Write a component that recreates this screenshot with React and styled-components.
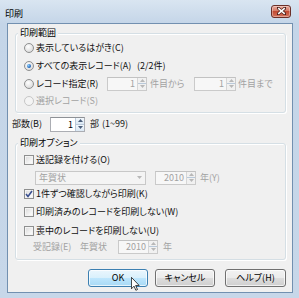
import React from 'react'
import styled, { createGlobalStyle } from 'styled-components'

const GlobalStyle = createGlobalStyle`
  html, body {
    margin: 0;
    padding: 0;
    background: #c8d8ea;
  }
  body {
    font-family: "Noto Sans CJK JP", "Noto Sans", sans-serif;
    font-size: 9px;
    color: #000;
  }
  * {
    box-sizing: border-box;
  }
`

const Window = styled.div`
  position: relative;
  width: 299px;
  height: 298px;
  overflow: hidden;
  display: flex;
  flex-direction: column;
  background: linear-gradient(#d9e5f1, #c4d5e8 24px, #c7d7e9);
  font-feature-settings: 'palt';
  line-height: 12px;
`

const TitleBar = styled.div`
  height: 23px;
  flex: none;
  display: flex;
  align-items: center;
  justify-content: space-between;
  padding: 0 8px 0 5px;
`

const Title = styled.span`
  font-size: 9px;
  margin-top: 5px;
`

const CloseBtn = styled.div`
  width: 20px;
  height: 13px;
  margin-top: -1px;
  border: 1px solid #6b2f28;
  border-radius: 3px;
  display: flex;
  align-items: center;
  justify-content: center;
  background: linear-gradient(#e9a99b, #d57b68 45%, #c24a33 50%, #d4735c);
  box-shadow: inset 0 0 0 1px rgba(255, 255, 255, 0.35);
`

const Client = styled.div`
  flex: 1;
  margin: 0 6px 5px 7px;
  border: 1px solid #7290b0;
  background: #f0f0f0;
  display: flex;
  flex-direction: column;
  padding: 0 6px 0 7px;
`

const Group = styled.div`
  position: relative;
  margin-top: ${p => p.mt}px;
  border: 1px solid #d5dfe5;
  border-radius: 3px;
  box-shadow: inset 1px 1px 0 #fff, 1px 1px 0 #fff;
  padding: ${p => p.pt}px 0 ${p => p.pb}px 8px;
  display: flex;
  flex-direction: column;
`

const Legend = styled.span`
  position: absolute;
  top: -7px;
  left: 2px;
  padding: 0 2px;
  background: #f0f0f0;
`

const Row = styled.div`
  height: ${p => p.h}px;
  display: flex;
  align-items: center;
  flex: none;
`

const Label = styled.span`
  color: ${p => (p.disabled ? '#a2a2a2' : '#111')};
  width: ${p => (p.w ? `${p.w}px` : 'auto')};
  margin-left: ${p => p.ml || 0}px;
  white-space: nowrap;
  flex: none;
`

const RadioCircle = styled.span`
  width: 10px;
  height: 10px;
  flex: none;
  margin-right: 2px;
  border-radius: 50%;
  border: 1px solid ${p => (p.disabled ? '#c6c6c6' : '#8e8f8f')};
  background: ${p =>
    p.disabled
      ? '#f4f4f4'
      : 'radial-gradient(circle at 40% 35%, #ffffff, #e3e3e3 60%, #cfcfcf)'};
  display: flex;
  align-items: center;
  justify-content: center;

  &::after {
    content: '';
    display: ${p => (p.checked ? 'block' : 'none')};
    width: 4px;
    height: 4px;
    border-radius: 50%;
    background: radial-gradient(circle at 35% 35%, #8fd0ff, #1a5fb4 70%);
  }
`

const CheckBox = styled.span`
  width: 10px;
  height: 10px;
  flex: none;
  margin-right: 2px;
  border: 1px solid #8e8f8f;
  background: linear-gradient(135deg, #d8d8d8, #f6f6f6 70%, #fff);
  box-shadow: inset 0 0 0 1px #f4f4f4;
  display: flex;
  align-items: center;
  justify-content: center;
`

const SpinBox = styled.div`
  width: ${p => p.w}px;
  height: ${p => p.h || 14}px;
  flex: none;
  margin-left: ${p => p.ml || 0}px;
  border: 1px solid ${p => (p.disabled ? '#cacaca' : '#abadb3')};
  border-top-color: ${p => (p.disabled ? '#c2c2c2' : '#8e9196')};
  background: ${p => (p.disabled ? '#f7f7f7' : '#fff')};
  display: flex;
`

const SpinValue = styled.span`
  flex: 1;
  text-align: right;
  padding-right: 2px;
  line-height: ${p => (p.h || 14) - 2}px;
  color: ${p => (p.disabled ? '#a2a2a2' : '#000')};
`

const SpinButtons = styled.div`
  width: 9px;
  display: flex;
  flex-direction: column;
  border-left: 1px solid ${p => (p.disabled ? '#d6d6d6' : '#b9c9da')};
`

const SpinHalf = styled.div`
  flex: 1;
  display: flex;
  align-items: center;
  justify-content: center;
  background: ${p =>
    p.disabled ? '#f1f1f1' : 'linear-gradient(#f3f8fc, #dbe8f4)'};
  & + & {
    border-top: 1px solid ${p => (p.disabled ? '#d6d6d6' : '#b9c9da')};
  }
`

const Combo = styled.div`
  width: ${p => p.w}px;
  height: 14px;
  flex: none;
  margin-left: ${p => p.ml}px;
  border: 1px solid #c8c8c8;
  background: #f4f4f4;
  display: flex;
  align-items: center;
  justify-content: space-between;
  padding: 0 3px 0 3px;
  color: #a2a2a2;
`

const CopiesRow = styled.div`
  margin: 3px 0 0 -3px;
  height: 16px;
  display: flex;
  align-items: center;
  flex: none;
`

const ButtonBar = styled.div`
  margin-top: 9px;
  display: flex;
  justify-content: flex-end;
  flex: none;
`

const Button = styled.div`
  width: ${p => p.w}px;
  height: 18px;
  margin-left: ${p => p.ml || 0}px;
  border: 1px solid ${p => (p.primary ? '#3c7fb1' : '#707070')};
  border-radius: 3px;
  display: flex;
  align-items: center;
  justify-content: center;
  background: ${p =>
    p.primary
      ? 'linear-gradient(#eaf6fd, #d9f0fc 50%, #bee6fd 50%, #a7d9f5)'
      : 'linear-gradient(#f2f2f2, #ebebeb 50%, #dddddd 50%, #cfcfcf)'};
  box-shadow: inset 0 0 0 1px rgba(255, 255, 255, 0.7);
`

const Cursor = styled.svg`
  position: absolute;
  left: 131px;
  top: 277px;
`

function Arrow({ up, disabled }) {
  const c = disabled ? '#b8b8b8' : '#4b5e7a'
  return (
    <svg width="5" height="3" viewBox="0 0 5 3">
      <path d={up ? 'M0 3 L2.5 0 L5 3 Z' : 'M0 0 L2.5 3 L5 0 Z'} fill={c} />
    </svg>
  )
}

function Spinner({ value, w, h, ml, disabled }) {
  return (
    <SpinBox w={w} h={h} ml={ml} disabled={disabled}>
      <SpinValue h={h} disabled={disabled}>{value}</SpinValue>
      <SpinButtons disabled={disabled}>
        <SpinHalf disabled={disabled}>
          <Arrow up disabled={disabled} />
        </SpinHalf>
        <SpinHalf disabled={disabled}>
          <Arrow disabled={disabled} />
        </SpinHalf>
      </SpinButtons>
    </SpinBox>
  )
}

function Check({ checked }) {
  return (
    <CheckBox>
      {checked && (
        <svg width="8" height="8" viewBox="0 0 8 8">
          <path d="M1 4 L3 6.5 L7 1" fill="none" stroke="#3a4f8f" strokeWidth="1.6" />
        </svg>
      )}
    </CheckBox>
  )
}

export default function App() {
  return (
    <>
      <GlobalStyle />
      <Window>
        <TitleBar>
          <Title>印刷</Title>
          <CloseBtn>
            <svg width="9" height="8" viewBox="0 0 9 8">
              <path
                d="M1 1 L8 7 M8 1 L1 7"
                stroke="#4a1d18"
                strokeWidth="3"
                strokeLinecap="square"
              />
              <path d="M1.2 1.2 L7.8 6.8 M7.8 1.2 L1.2 6.8" stroke="#fff" strokeWidth="1.6" />
            </svg>
          </CloseBtn>
        </TitleBar>
        <Client>
          <Group mt={9} pt={5} pb={3}>
            <Legend>印刷範囲</Legend>
            <Row h={18}>
              <RadioCircle />
              <Label>表示しているはがき(C)</Label>
            </Row>
            <Row h={18}>
              <RadioCircle checked />
              <Label w={101}>すべての表示レコード(A)</Label>
              <Label>(2/2件)</Label>
            </Row>
            <Row h={17}>
              <RadioCircle />
              <Label w={71}>レコード指定(R)</Label>
              <Spinner value="1" w={40} disabled />
              <Label w={44} ml={3} disabled>
                件目から
              </Label>
              <Spinner value="1" w={42} disabled />
              <Label ml={2} disabled>
                件目まで
              </Label>
            </Row>
            <Row h={17}>
              <RadioCircle disabled />
              <Label disabled>選択レコード(S)</Label>
            </Row>
          </Group>

          <CopiesRow>
            <Label w={38}>部数(B)</Label>
            <Spinner value="1" w={35} h={15} />
            <Label ml={5}>部</Label>
            <Label ml={3}>(1~99)</Label>
          </CopiesRow>

          <Group mt={11} pt={7} pb={6}>
            <Legend>印刷オプション</Legend>
            <Row h={18}>
              <Check />
              <Label>送記録を付ける(O)</Label>
            </Row>
            <Row h={17}>
              <Combo w={111} ml={11}>
                <span>年賀状</span>
                <Arrow disabled />
              </Combo>
              <Spinner value="2010" w={41} ml={9} disabled />
              <Label ml={4} disabled>
                年(Y)
              </Label>
            </Row>
            <Row h={16}>
              <Check checked />
              <Label>1件ずつ確認しながら印刷(K)</Label>
            </Row>
            <Row h={19}>
              <Check />
              <Label>印刷済みのレコードを印刷しない(W)</Label>
            </Row>
            <Row h={19}>
              <Check />
              <Label>喪中のレコードを印刷しない(U)</Label>
            </Row>
            <Row h={13}>
              <Label w={47} ml={9} disabled>
                受記録(E)
              </Label>
              <Label w={38} disabled>
                年賀状
              </Label>
              <Spinner value="2010" w={40} disabled />
              <Label ml={5} disabled>
                年
              </Label>
            </Row>
          </Group>

          <ButtonBar>
            <Button w={60} primary>
              OK
            </Button>
            <Button w={60} ml={7}>
              キャンセル
            </Button>
            <Button w={61} ml={10}>
              ヘルプ(H)
            </Button>
          </ButtonBar>
        </Client>
        <Cursor width="9" height="14" viewBox="0 0 12 19">
          <path
            d="M0.5 0.5 L0.5 16 L4 12.5 L6.5 18 L8.7 17 L6.2 11.5 L11 11.5 Z"
            fill="#fff"
            stroke="#000"
            strokeWidth="1"
          />
        </Cursor>
      </Window>
    </>
  )
}
